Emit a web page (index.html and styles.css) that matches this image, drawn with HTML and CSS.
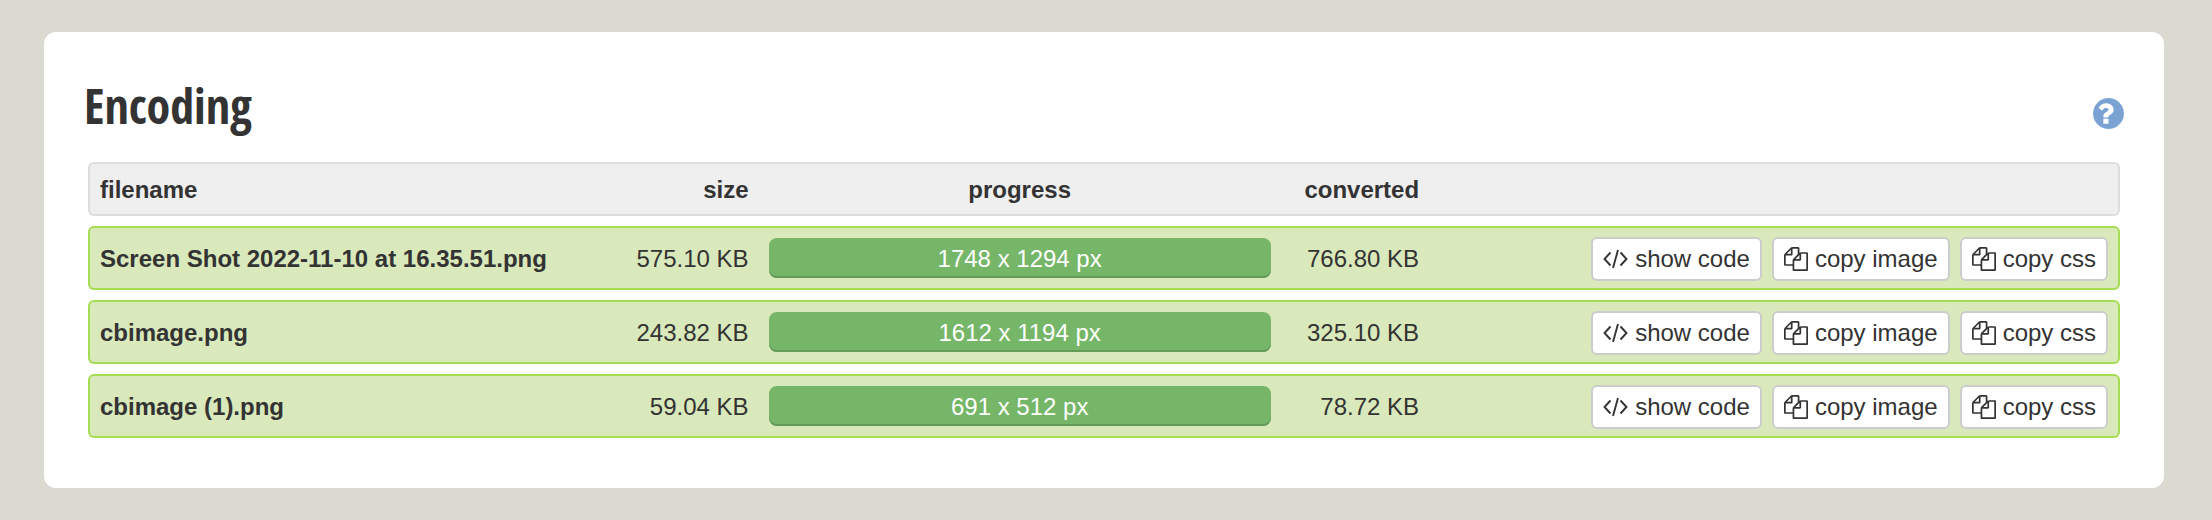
FILE: index.html
```
<!DOCTYPE html>
<html lang="en">
<head>
<meta charset="utf-8">
<title>Encoding</title>
<link rel="stylesheet" href="styles.css">
</head>
<body>
<svg class="sprite" aria-hidden="true">
  <symbol id="icon-code" viewBox="0 0 25 24">
    <path d="M7.500 5.500 1.500 12l6 6.500M17.500 5.500l6 6.500-6 6.500M15 3l-5 18" fill="none" stroke="currentColor" stroke-width="1.900"/>
  </symbol>
  <symbol id="icon-copy" viewBox="0 0 1792 1792">
    <path fill="currentColor" d="M1696 384q40 0 68 28t28 68v1216q0 40-28 68t-68 28h-960q-40 0-68-28t-28-68v-288h-544q-40 0-68-28t-28-68v-672q0-40 20-88t48-76l408-408q28-28 76-48t88-20h416q40 0 68 28t28 68v328q68-40 128-40h416zm-544 213l-299 299h299v-299zm-640-384l-299 299h299v-299zm196 647l316-316v-416h-384v416q0 40-28 68t-68 28h-416v640h512v-256q0-40 20-88t48-76zm956 804v-1152h-384v416q0 40-28 68t-68 28h-416v640h896z"/>
  </symbol>
</svg>
<main class="card">
  <header class="card-header">
    <h1 class="title">Encoding</h1>
    <button class="help" type="button" aria-label="Help">
      <svg class="help-icon" viewBox="128 128 1536 1536" aria-hidden="true"><path fill="currentColor" d="M896 1376v-192q0-14-9-23t-23-9h-192q-14 0-23 9t-9 23v192q0 14 9 23t23 9h192q14 0 23-9t9-23zm256-672q0-88-55.500-163t-138.500-116-170-41q-243 0-371 213-15 24 8 42l132 100q7 6 19 6 16 0 25-12 53-68 86-92 34-24 86-24 48 0 85.500 26t37.500 59q0 38-20 61t-68 45q-63 28-115.500 86.500t-52.500 125.500v36q0 14 9 23t23 9h192q14 0 23-9t9-23q0-19 21.500-49.500t54.500-49.500q32-18 49-28.500t46-35 44.500-48 28-60.500 12.500-81zm512 192q0 209-103 385.500t-279.500 279.500-385.500 103-385.500-103-279.500-279.500-103-385.500 103-385.500 279.500-279.500 385.500-103 385.500 103 279.500 279.500 103 385.500z"/></svg>
    </button>
  </header>
  <div class="table-wrap">
    <table class="files">
      <colgroup>
        <col class="col-name"><col class="col-size"><col class="col-progress"><col class="col-converted"><col>
      </colgroup>
      <thead>
        <tr>
          <th class="name" scope="col">filename</th>
          <th class="number" scope="col">size</th>
          <th class="progress" scope="col">progress</th>
          <th class="number" scope="col">converted</th>
          <td></td>
        </tr>
      </thead>
      <tbody>
        <tr>
          <th class="name" scope="row">Screen Shot 2022-11-10 at 16.35.51.png</th>
          <td class="number">575.10 KB</td>
          <td class="progress"><div class="bar">1748 x 1294 px</div></td>
          <td class="number">766.80 KB</td>
          <td><div class="actions">
            <button class="action" type="button"><svg class="icon icon-wide" aria-hidden="true"><use href="#icon-code"/></svg>show code</button>
            <button class="action" type="button"><svg class="icon" aria-hidden="true"><use href="#icon-copy"/></svg>copy image</button>
            <button class="action" type="button"><svg class="icon" aria-hidden="true"><use href="#icon-copy"/></svg>copy css</button>
          </div></td>
        </tr>
        <tr>
          <th class="name" scope="row">cbimage.png</th>
          <td class="number">243.82 KB</td>
          <td class="progress"><div class="bar">1612 x 1194 px</div></td>
          <td class="number">325.10 KB</td>
          <td><div class="actions">
            <button class="action" type="button"><svg class="icon icon-wide" aria-hidden="true"><use href="#icon-code"/></svg>show code</button>
            <button class="action" type="button"><svg class="icon" aria-hidden="true"><use href="#icon-copy"/></svg>copy image</button>
            <button class="action" type="button"><svg class="icon" aria-hidden="true"><use href="#icon-copy"/></svg>copy css</button>
          </div></td>
        </tr>
        <tr>
          <th class="name" scope="row">cbimage (1).png</th>
          <td class="number">59.04 KB</td>
          <td class="progress"><div class="bar">691 x 512 px</div></td>
          <td class="number">78.72 KB</td>
          <td><div class="actions">
            <button class="action" type="button"><svg class="icon icon-wide" aria-hidden="true"><use href="#icon-code"/></svg>show code</button>
            <button class="action" type="button"><svg class="icon" aria-hidden="true"><use href="#icon-copy"/></svg>copy image</button>
            <button class="action" type="button"><svg class="icon" aria-hidden="true"><use href="#icon-copy"/></svg>copy css</button>
          </div></td>
        </tr>
      </tbody>
    </table>
  </div>
</main>
</body>
</html>
```
FILE: styles.css
```
* {
  box-sizing: border-box;
}

body {
  margin: 0;
  padding: 32px 48px 32px 44px;
  background: #dadad1;
  color: #333;
  font-family: "Helvetica Neue", "Liberation Sans", Arial, sans-serif;
  font-size: 24px;
  line-height: 34px;
}

.sprite {
  display: none;
}

.card {
  padding: 40px 40px 40px;
  border-radius: 12px;
  background: #fff;
}

.card-header {
  display: flex;
  align-items: flex-start;
  justify-content: space-between;
  height: 80px;
}

.title {
  margin: 0;
  font-family: "Open Sans Condensed", "Open Sans", sans-serif;
  font-size: 48px;
  font-weight: 700;
  line-height: 68px;
}

.help {
  display: flex;
  align-self: center;
  padding: 2px 0 0;
  border: 0;
  background: none;
  color: #7aa3d4;
  cursor: pointer;
}

.help-icon {
  width: 31px;
  height: 31px;
}

.table-wrap {
  padding: 0 4px;
}

.files {
  width: 100%;
  border-collapse: separate;
  border-spacing: 0 10px;
  table-layout: fixed;
}

.col-name {
  width: 25%;
}

.col-size {
  width: 8%;
}

.col-progress {
  width: 25.7%;
}

.col-converted {
  width: 7.3%;
}

.files th,
.files td {
  padding: 9px 10px 7px;
  border: 0 solid #a4dd50;
  border-width: 2px 0;
  background: #d9e9bb;
  text-align: left;
  vertical-align: middle;
  white-space: nowrap;
}

.files thead th,
.files thead td {
  border-color: #ddd;
  background: #efefef;
}

.files tr > :first-child {
  border-left-width: 2px;
  border-radius: 6px 0 0 6px;
}

.files tr > :last-child {
  border-right-width: 2px;
  border-radius: 0 6px 6px 0;
}

.files .number {
  text-align: right;
}

.files .progress {
  text-align: center;
}

.files td.progress {
  padding-top: 8px;
  padding-bottom: 8px;
}

.bar {
  height: 40px;
  border-radius: 8px;
  background: #76b668;
  box-shadow: inset 0 -2px 0 #659b59;
  color: #fff;
  line-height: 42px;
}

.actions {
  display: flex;
  justify-content: flex-end;
  gap: 10px;
}

.action {
  display: flex;
  align-items: center;
  gap: 7px;
  height: 44px;
  padding: 0 10px;
  border: 2px solid #ccc;
  border-radius: 6px;
  background: #fff;
  color: inherit;
  font: inherit;
  cursor: pointer;
}

.icon {
  width: 24px;
  height: 24px;
}

.icon-wide {
  width: 25px;
}
```
